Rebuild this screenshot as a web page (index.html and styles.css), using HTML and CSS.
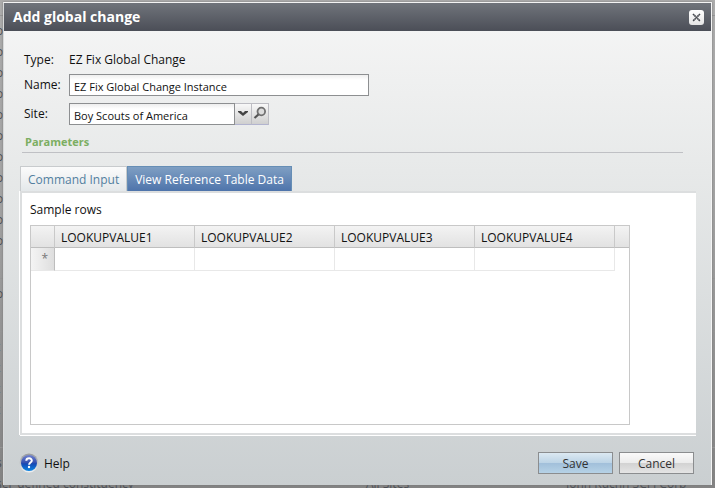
FILE: index.html
```html
<!DOCTYPE html>
<html lang="en">
<head>
<meta charset="utf-8">
<title>Add global change</title>
<link rel="stylesheet" href="styles.css">
</head>
<body>
<div class="backdrop" aria-hidden="true">
  <ul class="group"><li>o</li><li>o</li><li>o</li><li>o</li><li>o</li><li>o</li><li>o</li><li>o</li><li>o</li><li>o</li><li>o</li></ul>
  <ul class="group"><li>o</li></ul>
  <ul class="group"><li>t</li><li>t</li><li>t</li><li>t</li></ul>
  <ul class="group"><li>s</li><li class="record"><span>ser-defined constituency</span><span>All Sites</span><span>John Kuchn SCFI Corp</span></li></ul>
</div>
<form class="dialog" role="dialog" aria-labelledby="title">
  <header class="titlebar">
    <h1 id="title">Add global change</h1>
    <button type="button" class="close" aria-label="Close">
      <svg viewBox="0 0 15 15" width="15" height="15"><path d="M4 4l7 7M11 4l-7 7" stroke="#44474d" stroke-width="1.6" stroke-dasharray="1.7 .3"/></svg>
    </button>
  </header>
  <main class="content">
    <div class="fields">
      <span>Type:</span><span>EZ Fix Global Change</span>
      <label for="name">Name:</label><input id="name" class="box name" type="text" value="EZ Fix Global Change Instance">
      <label for="site">Site:</label>
      <div class="combo">
        <input id="site" class="box site" type="text" value="Boy Scouts of America">
        <button type="button" class="mini" aria-label="Show sites"><svg viewBox="0 0 16 20" width="16" height="20"><path d="M3 7h3l2 2 2-2h3v1l-5 4-5-4z" fill="#444"/></svg></button>
        <button type="button" class="mini" aria-label="Search sites"><svg viewBox="0 0 16 20" width="16" height="20"><circle cx="9.300" cy="7.500" r="3.800" fill="#dcdcdc" stroke="#707070" stroke-width="1.800"/><path d="M6.400 10.500L2.500 14" stroke="#555" stroke-width="2.200"/></svg></button>
      </div>
    </div>
    <h2 class="section">Parameters</h2>
    <div class="tabs" role="tablist">
      <button type="button" class="tab" role="tab" aria-selected="false">Command Input</button>
      <button type="button" class="tab active" role="tab" aria-selected="true">View Reference Table Data</button>
    </div>
    <section class="panel" role="tabpanel">
      <p class="caption" id="rows">Sample rows</p>
      <div class="gridbox">
        <table aria-labelledby="rows">
          <colgroup><col class="c-mark"><col class="c-value"><col class="c-value"><col class="c-value"><col class="c-value"><col></colgroup>
          <thead><tr><th></th><th>LOOKUPVALUE1</th><th>LOOKUPVALUE2</th><th>LOOKUPVALUE3</th><th>LOOKUPVALUE4</th><th></th></tr></thead>
          <tbody><tr><td class="mark">*</td><td></td><td></td><td></td><td></td><td class="rest"></td></tr></tbody>
        </table>
      </div>
    </section>
  </main>
  <footer class="actions">
    <a class="help" href="#help">
      <svg viewBox="0 0 20 20" width="20" height="20">
        <defs><linearGradient id="ball" x1="0" y1="0" x2="0" y2="1"><stop offset="0" stop-color="#7182cf"/><stop offset=".48" stop-color="#3450b0"/><stop offset=".55" stop-color="#1548b4"/><stop offset="1" stop-color="#0a86e4"/></linearGradient>
        <linearGradient id="rim" x1="0" y1="0" x2="0" y2="1"><stop offset="0" stop-color="#96999c"/><stop offset="1" stop-color="#f0f2f4"/></linearGradient></defs>
        <circle cx="10" cy="10" r="9.500" fill="url(#rim)"/><circle cx="10" cy="10" r="8" fill="url(#ball)"/>
        <path d="M7.300 7.700C7.500 4.500 13 4.600 12.800 7.700c-.1 1.800-2.700 1.900-2.700 4" fill="none" stroke="#fff" stroke-width="2"/><circle cx="10" cy="14" r="1.200" fill="#fff"/>
      </svg>
      <span>Help</span>
    </a>
    <button type="submit" class="action primary">Save</button>
    <button type="button" class="action">Cancel</button>
  </footer>
</form>
</body>
</html>
```
FILE: styles.css
```css
* { box-sizing: border-box; }
body {
  margin: 0;
  min-height: 100vh;
  display: flex;
  overflow: hidden;
  padding: 2px 3px 3px;
  background: linear-gradient(#adadad, #a3a3a3 40%, #848484);
  font: 12px/20px "Open Sans", "Noto Sans", sans-serif;
  color: #111;
}
button, input { font: inherit; color: inherit; margin: 0; }
svg { display: block; }

.backdrop {
  position: absolute;
  inset: 0;
  overflow: hidden;
  padding-top: 15px;
  color: #4c4f55;
  line-height: 21px;
}
.group {
  margin: 0 0 27px;
  padding: 4px 0 0;
  list-style: none;
  border-top: 1px solid #969696;
}
.group li { height: 21px; margin-left: -4px; }
.record { display: grid; grid-template-columns: 370px 200px auto; }

.dialog {
  position: relative;
  flex: 1;
  display: flex;
  flex-direction: column;
  border: 1px solid #f4f4f4;
  border-left-color: #d8dadb;
  border-bottom: 0;
  background: linear-gradient(#f6f6f6, #e7e9e9 35%, #cacfd1);
  box-shadow: 0 0 2px #777;
}
.titlebar {
  display: flex;
  align-items: center;
  justify-content: space-between;
  height: 28px;
  padding: 0 7px 0 9px;
  background: linear-gradient(#70747b, #4b4e57);
}
.titlebar h1 { margin: 0; font-size: 14px; color: #fff; }
.close {
  width: 15px;
  height: 15px;
  padding: 0;
  border: 0;
  border-radius: 3px;
  background: linear-gradient(#fff, #e4e4e4);
}
.content {
  flex: 1;
  display: flex;
  flex-direction: column;
  padding: 22px 15px 0 16px;
}
.fields {
  display: grid;
  grid-template-columns: 45px 1fr;
  grid-template-rows: 14px 22px 22px;
  align-items: center;
  row-gap: 7px;
  padding-left: 4px;
}
.box {
  height: 22px;
  padding: 2px 4px 0;
  border: 1px solid #8d8f91;
  background: linear-gradient(#eee, #fff 5px);
  font-size: 11px;
}
.name { width: 300px; }
.site { width: 166px; }
.combo { display: flex; }
.mini {
  width: 17px;
  height: 22px;
  padding: 0;
  border: 1px solid #bdbdc3;
  border-left: 0;
  border-bottom-color: #b2b4cf;
  background: linear-gradient(#f8f8f8, #e4e4e4 50%, #cfcfcf);
}
.section {
  margin: 7px 13px 13px 2px;
  padding-left: 3px;
  border-bottom: 1px solid #bfc0c4;
  font-size: 11px;
  line-height: 20px;
  color: #7cae62;
}
.tabs { display: flex; }
.tab {
  height: 25px;
  padding: 2px 7px 0;
  border: 1px solid #c8cbcd;
  border-bottom: 0;
  background: linear-gradient(#fbfbfb, #e4e8ea);
  color: #527f9f;
  line-height: 20px;
}
.tab.active {
  border-color: #668eb5;
  background: linear-gradient(#7f9fc3, #4e74ab);
  color: #fff;
}
.panel {
  flex: 1;
  display: flex;
  flex-direction: column;
  padding: 7px 66px 8px 8px;
  border: 2px solid #dcdedf;
  border-right: 0;
  background: #fff;
  box-shadow: 0 1px #fff, -1px 0 #fff;
}
.caption { margin: 0 0 5px; }
.gridbox { flex: 1; border: 1px solid #c8c8c8; }
table { width: 100%; table-layout: fixed; border-collapse: separate; border-spacing: 0; }
.c-mark { width: 24px; }
.c-value { width: 140px; }
th {
  height: 22px;
  padding: 3px 6px 0;
  border-right: 1px solid #c9c9c9;
  border-bottom: 1px solid #bebebe;
  background: linear-gradient(#f3f3f3, #e2e2e2);
  font-weight: 400;
  line-height: 18px;
  text-align: left;
}
th:last-child { border-right: 0; }
td {
  height: 23px;
  padding: 0 6px;
  border-right: 1px solid #e8e8e8;
  border-bottom: 1px solid #e8e8e8;
  line-height: 18px;
}
.mark { border-right-color: #bdbdbd; background: linear-gradient(90deg, #f4f4f4, #dedede); color: #777; text-align: right; }
.rest { border: 0; }

.actions {
  display: flex;
  align-items: center;
  gap: 6px;
  height: 50px;
  padding: 6px 17px 0 15px;
}
.help { display: flex; gap: 5px; align-items: center; margin-right: auto; color: inherit; text-decoration: none; }
.help span { padding-top: 2px; }
.action {
  width: 75px;
  height: 22px;
  padding: 2px 0 0;
  border: 1px solid #8b8d8f;
  background: linear-gradient(#fafafa, #ececec 48%, #d2d2d2 50%, #e4e4e4);
  line-height: 18px;
  color: #333;
}
.primary { background: linear-gradient(#dce9f2, #bdd4e6 48%, #a1bfda 50%, #b6d2e6); }
```
